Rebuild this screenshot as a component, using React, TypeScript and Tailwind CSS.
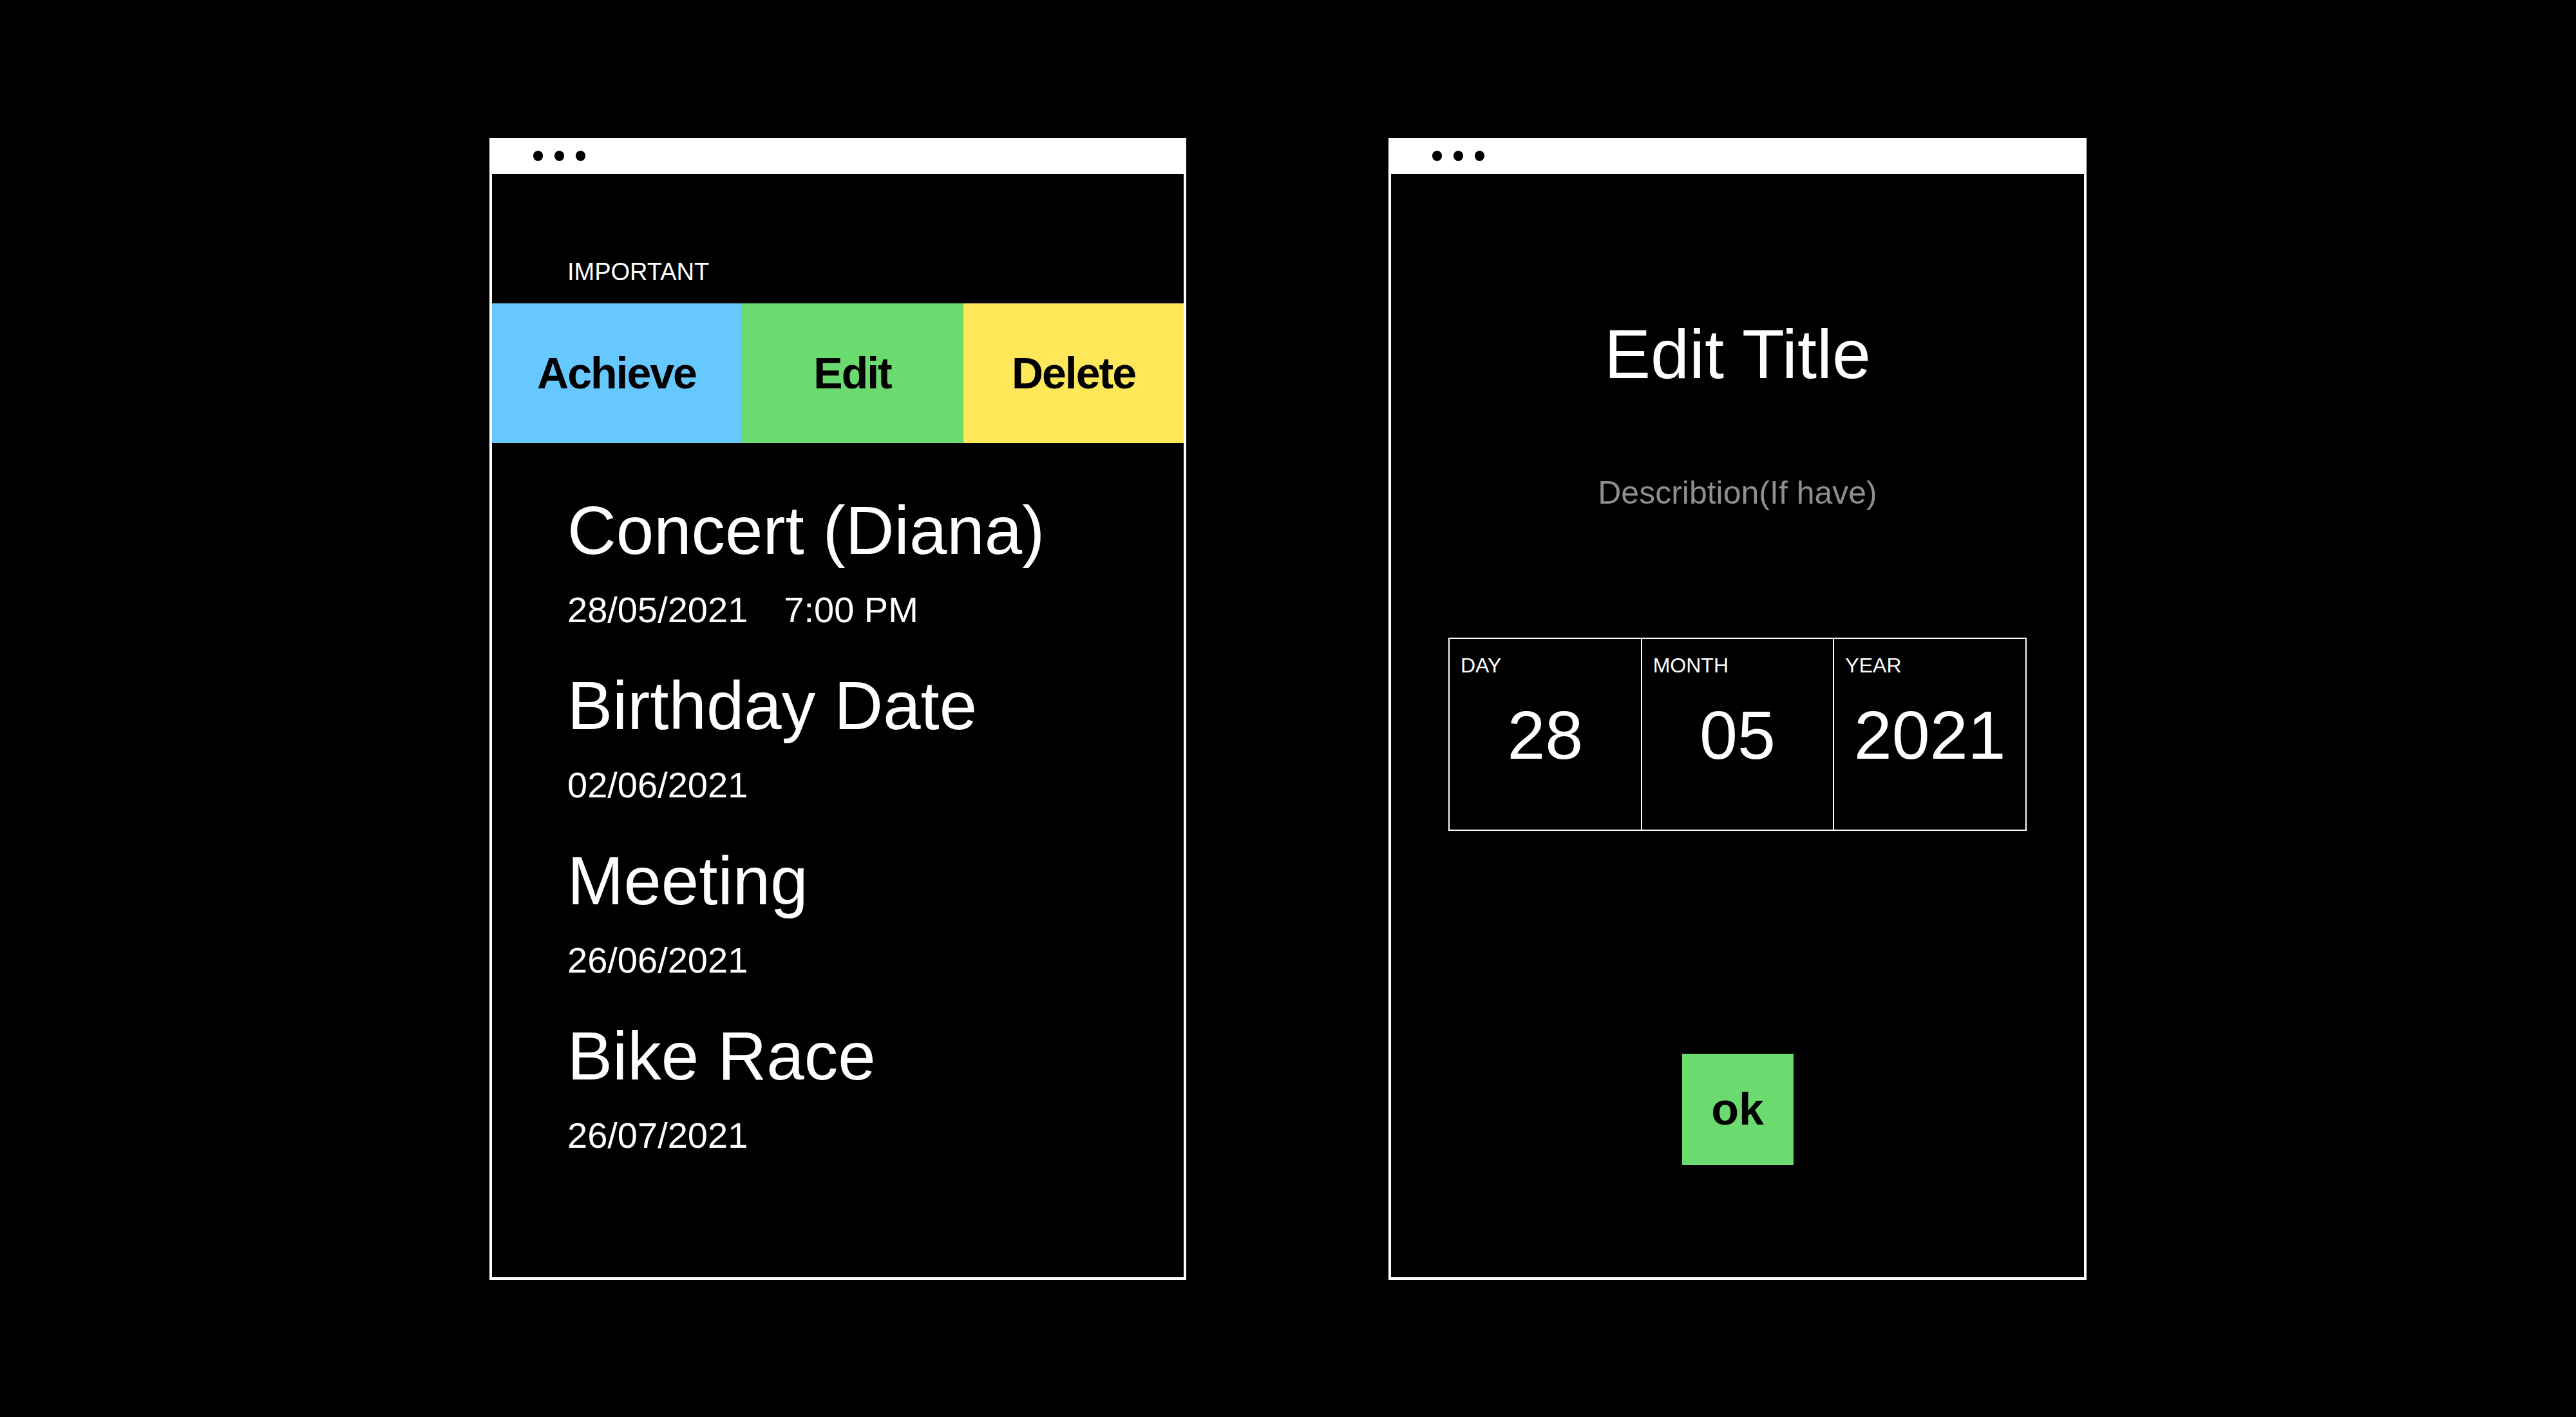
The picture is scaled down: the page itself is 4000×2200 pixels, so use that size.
const font = "font-['Liberation_Sans',Arial,sans-serif]";

const events = [
  { title: "Concert (Diana)", date: "28/05/2021", time: "7:00 PM" },
  { title: "Birthday Date", date: "02/06/2021" },
  { title: "Meeting", date: "26/06/2021" },
  { title: "Bike Race", date: "26/07/2021" },
];

function TitleBar() {
  return (
    <div className="h-[52px] bg-white flex items-center gap-[18px] pl-[64px] pb-[4px] shrink-0">
      <span className="w-[15px] h-[16px] rounded-full bg-black" />
      <span className="w-[15px] h-[16px] rounded-full bg-black" />
      <span className="w-[15px] h-[16px] rounded-full bg-black" />
    </div>
  );
}

function ListWindow() {
  return (
    <div className="w-[1082px] h-[1773px] border-4 border-white bg-black flex flex-col">
      <TitleBar />
      <div className="flex flex-col text-white">
        <p className="pt-[133px] pl-[117px] text-[38px] leading-none">IMPORTANT</p>

        <div className="mt-[30px] h-[217px] flex flex-row text-black font-bold text-[68px] tracking-[-2px]">
          <button className="w-[387px] bg-[#67c8ff] grid place-items-center">Achieve</button>
          <button className="w-[345px] bg-[#6bdb6f] grid place-items-center">Edit</button>
          <button className="flex-1 bg-[#ffe75a] grid place-items-center">Delete</button>
        </div>

        <div className="mt-[83px] pl-[117px] flex flex-col gap-[68px]">
          {events.map((ev) => (
            <div key={ev.title} className="flex flex-col">
              <p className="text-[105px] leading-none">{ev.title}</p>
              <p className="mt-[43px] text-[56px] leading-none">
                <span>{ev.date}</span>
                {ev.time && <span className="ml-[56px]">{ev.time}</span>}
              </p>
            </div>
          ))}
        </div>
      </div>
    </div>
  );
}

function DateCell({ label, value, last }: { label: string; value: string; last?: boolean }) {
  return (
    <div
      className={
        last
          ? "flex-1 flex flex-col pt-[25px]"
          : "flex-1 flex flex-col pt-[25px] border-r-2 border-white"
      }
    >
      <p className="pl-[17px] text-[32px] leading-none">{label}</p>
      <p className="mt-[39px] text-center text-[106px] leading-none">{value}</p>
    </div>
  );
}

function EditWindow() {
  return (
    <div className="w-[1084px] h-[1773px] border-4 border-white bg-black flex flex-col">
      <TitleBar />
      <div className="flex flex-col items-center text-white">
        <p className="pt-[226px] text-[108px] leading-none">Edit Title</p>
        <p className="mt-[136px] text-[50px] leading-none text-[#8e8e8e]">Describtion(If have)</p>

        <div className="mt-[200px] w-[898px] h-[300px] border-2 border-white flex flex-row">
          <DateCell label="DAY" value="28" />
          <DateCell label="MONTH" value="05" />
          <DateCell label="YEAR" value="2021" last />
        </div>

        <button className="mt-[346px] w-[173px] h-[173px] bg-[#6bdb6f] text-black font-bold text-[70px] leading-none grid place-items-center">
          ok
        </button>
      </div>
    </div>
  );
}

export default function App() {
  return (
    <div className={`w-[4000px] h-[2200px] bg-black flex flex-row items-center justify-center gap-[314px] ${font}`}>
      <ListWindow />
      <EditWindow />
    </div>
  );
}
